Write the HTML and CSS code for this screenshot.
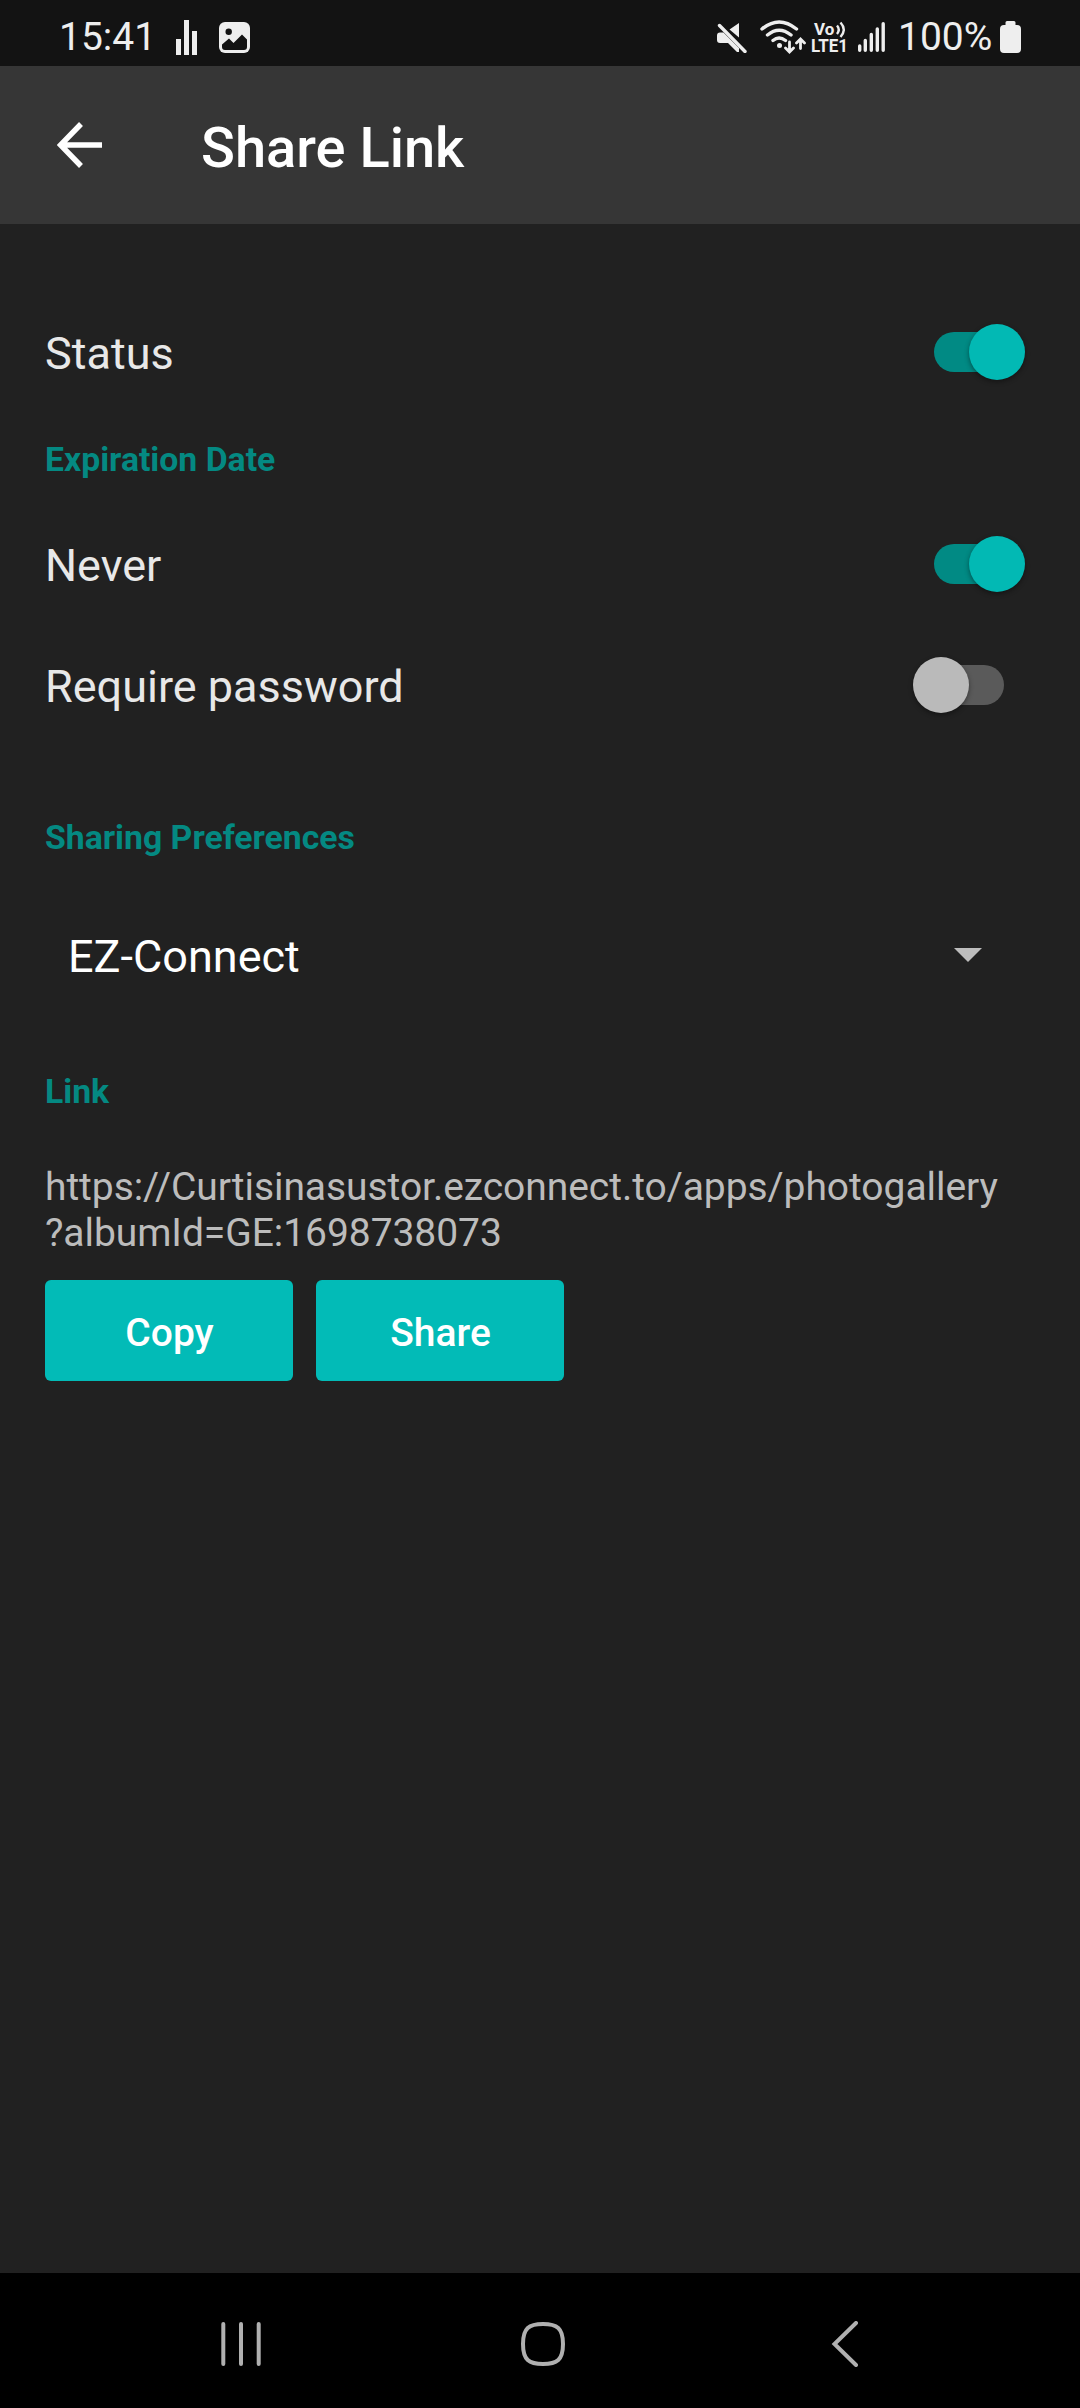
FILE: index.html
```
<!DOCTYPE html>
<html lang="en">
<head>
    <meta charset="UTF-8">
    <meta name="viewport" content="width=device-width, initial-scale=1.0">
    <title>Share Link</title>
    <link rel="stylesheet" href="styles.css">
</head>
<body>
    <div class="status-bar">
        <div class="status-left">
            <span class="clock">15:41</span>
            <svg class="icon-bars" width="21" height="35" viewBox="0 0 21 35">
                <path d="M0 19h5v16H0zM8 0h5v35H8zM16 11h5v24h-5z"/>
            </svg>
            <svg class="icon-image" width="31" height="31" viewBox="0 0 31 31">
                <rect width="31" height="31" rx="6"/>
                <circle class="hole" cx="9.7" cy="9.8" r="3.2"/>
                <path class="hole" d="M3 22.500l7-6 4.500 4.500 8.500-8.500 5 5V25q0 3-3 3H6q-3 0-3-3z"/>
            </svg>
        </div>
        <div class="status-right">
            <svg class="icon-mute" width="30" height="31" viewBox="0 0 30 31">
                <path d="M22 1v14.500l-9.500-8zM3 10.500h3.500L22 26v4h-2l-9-9H3q-3 0-3-3v-4.500q0-3 3-3z"/>
                <path class="line" d="M2.500 3.500l25.500 26"/>
            </svg>
            <svg class="icon-wifi" width="46" height="35" viewBox="0 0 46 35">
                <path class="line" d="M2 9Q19-5 36.500 9M7.500 15q11.500-9.500 23.500 0M13 20.500q6-5 12.500 0"/>
                <circle cx="19.500" cy="25.500" r="2.500"/>
                <path class="line arrows" d="M29.500 22v9M25.500 28l4 4 4-4M40.500 28.500v-9M36.500 23l4-4 4 4"/>
            </svg>
            <svg class="icon-lte" width="38" height="34" viewBox="0 0 38 34">
                <text x="3" y="15" font-size="17">Vo</text>
                <path class="wave" d="M26 5.500q3.500 4 0 8.500M29.500 2.500q6.500 7 0 14.500"/>
                <text x="0" y="32" font-size="18.500" textLength="37" lengthAdjust="spacingAndGlyphs">LTE1</text>
            </svg>
            <svg class="icon-signal" width="27" height="30" viewBox="0 0 27 30">
                <path class="line" d="M1.700 24v4.300M7.300 18.500v9.800M13.300 12.500v15.800M19.300 7v21.300M25.200 1.700v26.600"/>
            </svg>
            <span class="battery-text">100%</span>
            <svg class="icon-battery" width="21" height="32" viewBox="0 0 21 32">
                <path d="M7 0h7q1.500 0 1.500 1.500V4H17q4 0 4 4v20q0 4-4 4H4q-4 0-4-4V8q0-4 4-4h1.500V1.500Q5.500 0 7 0z"/>
            </svg>
        </div>
    </div>

    <header class="header">
        <svg class="back" width="46" height="46" viewBox="0 0 46 46">
            <path d="M24 2L3.500 23 24 44M4 23h41"/>
        </svg>
        <h1>Share Link</h1>
    </header>

    <main class="content">
        <div class="row">
            <span>Status</span>
            <div class="switch on"><div class="thumb"></div></div>
        </div>

        <h2 class="expiration">Expiration Date</h2>
        <div class="row">
            <span>Never</span>
            <div class="switch on"><div class="thumb"></div></div>
        </div>
        <div class="row password">
            <span>Require password</span>
            <div class="switch"><div class="thumb"></div></div>
        </div>

        <h2 class="preferences">Sharing Preferences</h2>
        <div class="row select">
            <span>EZ-Connect</span>
            <svg width="28" height="14" viewBox="0 0 28 14"><path d="M0 0h28L14 14z"/></svg>
        </div>

        <h2 class="link-title">Link</h2>
        <p class="link">https://Curtisinasustor.ezconnect.to/apps/photogallery<br>?albumId=GE:1698738073</p>
        <div class="buttons">
            <button>Copy</button>
            <button>Share</button>
        </div>
    </main>

    <nav class="nav-bar">
        <svg width="40" height="46" viewBox="0 0 40 46"><path d="M2.300 3v40M20 3v40M37.700 3v40"/></svg>
        <svg width="46" height="46" viewBox="0 0 46 46"><path d="M23 3C37 3 43 7 43 23S37 43 23 43 3 39 3 23 9 3 23 3z"/></svg>
        <svg width="28" height="46" viewBox="0 0 28 46"><path d="M25 2L3.500 23 25 44"/></svg>
    </nav>
</body>
</html>
```
FILE: styles.css
```
* {
    box-sizing: border-box;
}
body {
    margin: 0;
    height: 2408px;
    display: flex;
    flex-direction: column;
    background-color: #212121;
    font-family: Roboto, sans-serif;
    color: #e8e8e8;
}
svg {
    display: block;
    flex-shrink: 0;
}
.status-bar {
    height: 66px;
    padding: 0 59px 0 59px;
    display: flex;
    justify-content: space-between;
    background-color: #131313;
    color: #eeeeee;
    font-size: 39px;
    line-height: 46px;
}
.status-bar svg {
    fill: #eeeeee;
}
.status-bar .hole {
    fill: #131313;
}
.status-bar .line {
    fill: none;
    stroke: #eeeeee;
    stroke-width: 3.4;
    stroke-linecap: round;
}
.status-bar .arrows {
    stroke-width: 2.8;
}
.status-left,
.status-right {
    display: flex;
    align-items: flex-start;
}
.clock {
    width: 117px;
    margin-top: 14px;
}
.icon-bars {
    margin-top: 20px;
}
.icon-image {
    margin: 22px 0 0 22px;
}
.icon-mute {
    margin-top: 22px;
}
.icon-wifi {
    margin: 20px 0 0 13px;
}
.icon-lte {
    margin: 20px 0 0 5px;
    overflow: visible;
    font-weight: 700;
}
.icon-lte .wave {
    fill: none;
    stroke: #eeeeee;
    stroke-width: 2.4;
}
.icon-signal {
    margin: 22px 0 0 9px;
}
.battery-text {
    width: 102px;
    margin: 14px 0 0 13px;
}
.icon-battery {
    margin-top: 21px;
}
.header {
    height: 158px;
    padding-left: 57px;
    display: flex;
    align-items: center;
    background-color: #363636;
    color: #ffffff;
}
.back {
    fill: none;
    stroke: #ffffff;
    stroke-width: 5.5;
}
h1 {
    margin: 5px 0 0 98px;
    font-size: 56px;
    font-weight: 500;
    line-height: 64px;
}
.content {
    flex: 1;
    padding: 75px 55px 0 45px;
}
.row {
    height: 106px;
    display: flex;
    align-items: center;
    justify-content: space-between;
    font-size: 45px;
}
.row span {
    padding-top: 3px;
}
.password {
    margin-top: 15px;
}
h2 {
    margin: 0;
    font-size: 33.75px;
    font-weight: 700;
    line-height: 40px;
    color: #048982;
}
.expiration {
    margin: 35px 0 31px;
}
.preferences {
    margin: 80px 0 44px;
}
.link-title {
    margin: 64px 0 52px;
}
.switch {
    width: 112px;
    padding: 0 21px;
    position: relative;
}
.switch::before {
    content: "";
    display: block;
    height: 40px;
    border-radius: 20px;
    background-color: #5a5a5a;
}
.thumb {
    position: absolute;
    top: -8px;
    left: 0;
    width: 56px;
    height: 56px;
    border-radius: 50%;
    background-color: #bababa;
    box-shadow: 0 2px 5px rgba(0, 0, 0, 0.4);
}
.switch.on::before {
    background-color: #018a84;
}
.switch.on .thumb {
    left: 56px;
    background-color: #02b9b4;
}
.select {
    padding: 0 43px 0 23px;
    color: #ffffff;
}
.select svg {
    fill: #bdbdbd;
}
.link {
    margin: 0 0 24px;
    font-size: 39px;
    line-height: 46px;
    letter-spacing: -0.06px;
    color: #bcbcbc;
    white-space: nowrap;
}
.buttons {
    display: flex;
    gap: 23px;
}
button {
    width: 248px;
    height: 101px;
    padding: 4px 0 0 1px;
    border: none;
    border-radius: 6px;
    background-color: #02bbb7;
    color: #ffffff;
    font-family: inherit;
    font-size: 39px;
    font-weight: 500;
}
.nav-bar {
    height: 135px;
    padding: 48px 220px 0 221px;
    display: grid;
    grid-template-columns: 299px 311px 28px;
    background-color: #000000;
}
.nav-bar svg {
    fill: none;
    stroke: #b0b0b0;
    stroke-width: 4;
    stroke-linecap: round;
}
```
